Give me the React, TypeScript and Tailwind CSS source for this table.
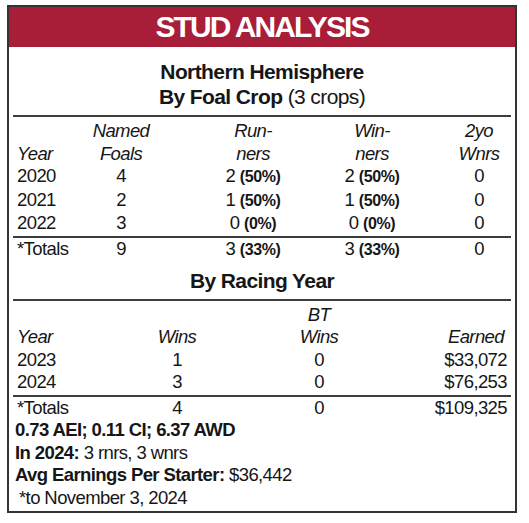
const crop = [
  { year: "2020", foals: "4", rnrs: "2", rp: "(50%)", wnrs: "2", wp: "(50%)", two: "0" },
  { year: "2021", foals: "2", rnrs: "1", rp: "(50%)", wnrs: "1", wp: "(50%)", two: "0" },
  { year: "2022", foals: "3", rnrs: "0", rp: "(0%)", wnrs: "0", wp: "(0%)", two: "0" },
];

const racing = [
  { year: "2023", wins: "1", bt: "0", earned: "$33,072" },
  { year: "2024", wins: "3", bt: "0", earned: "$76,253" },
];

function Pct({ n, p }: { n: string; p: string }) {
  return (
    <span className="whitespace-nowrap">
      {n} <span className="text-[16px] font-bold tracking-[-0.4px]">{p}</span>
    </span>
  );
}

function Rule() {
  return <div className="mx-1 h-[2px] bg-[#3d3d3d]" />;
}

export default function App() {
  return (
    <div className="min-h-[523px] bg-white pl-[7px] pt-[5px] font-['Liberation_Sans',Arial,sans-serif] text-[#161616]">
      <div className="w-[510px] border-2 border-[#333]">
        <div className="flex h-10 items-center justify-center bg-[#a81d37]">
          <h1 className="text-[30px] font-bold leading-none tracking-[-1.9px] text-white">STUD ANALYSIS</h1>
        </div>

        <div className="pt-[12px] text-center text-[21px] font-bold leading-[25px] tracking-[-0.6px]">
          <div>Northern Hemisphere</div>
          <div>
            By Foal Crop <span className="font-normal">(3 crops)</span>
          </div>
        </div>
        <div className="h-[6px]" />
        <Rule />

        <div className="grid grid-cols-[60px_88px_176px_62px_1fr] px-2 pt-[3px] text-[18.5px] leading-[22.5px] tracking-[-0.6px]">
          <div />
          <div className="text-center italic">Named</div>
          <div className="text-center italic">Run-</div>
          <div className="text-center italic">Win-</div>
          <div className="w-14 justify-self-end text-center italic">2yo</div>
          <div className="italic">Year</div>
          <div className="text-center italic">Foals</div>
          <div className="text-center italic">ners</div>
          <div className="text-center italic">ners</div>
          <div className="w-14 justify-self-end text-center italic">Wnrs</div>
          {crop.map((r) => (
            <div key={r.year} className="contents">
              <div>{r.year}</div>
              <div className="text-center">{r.foals}</div>
              <div className="text-center">
                <Pct n={r.rnrs} p={r.rp} />
              </div>
              <div className="text-center">
                <Pct n={r.wnrs} p={r.wp} />
              </div>
              <div className="w-14 justify-self-end text-center">{r.two}</div>
            </div>
          ))}
        </div>
        <Rule />
        <div className="grid grid-cols-[60px_88px_176px_62px_1fr] px-2 text-[18.5px] leading-[22.5px] tracking-[-0.6px]">
          <div>*Totals</div>
          <div className="text-center">9</div>
          <div className="text-center">
            <Pct n="3" p="(33%)" />
          </div>
          <div className="text-center">
            <Pct n="3" p="(33%)" />
          </div>
          <div className="w-14 justify-self-end text-center">0</div>
        </div>

        <div className="pt-[7px] text-center text-[21px] font-bold leading-[25px] tracking-[-0.6px]">By Racing Year</div>
        <div className="h-[5.5px]" />
        <Rule />

        <div className="grid grid-cols-[60px_200px_84px_1fr] px-2 pt-[3px] text-[18.5px] leading-[22.5px] tracking-[-0.6px]">
          <div />
          <div />
          <div className="text-center italic">BT</div>
          <div />
          <div className="italic">Year</div>
          <div className="text-center italic">Wins</div>
          <div className="text-center italic">Wins</div>
          <div className="pr-[3px] text-right italic">Earned</div>
          {racing.map((r) => (
            <div key={r.year} className="contents">
              <div>{r.year}</div>
              <div className="text-center">{r.wins}</div>
              <div className="text-center">{r.bt}</div>
              <div className="text-right">{r.earned}</div>
            </div>
          ))}
        </div>
        <div className="h-[1px]" />
        <Rule />
        <div className="px-2 pb-[2px] text-[18.5px] leading-[22.5px] tracking-[-0.6px]">
          <div className="grid grid-cols-[60px_200px_84px_1fr]">
            <div>*Totals</div>
            <div className="text-center">4</div>
            <div className="text-center">0</div>
            <div className="text-right">$109,325</div>
          </div>
          <div className="-ml-[2px] font-bold">0.73 AEI; 0.11 CI; 6.37 AWD</div>
          <div className="-ml-[2px]">
            <span className="font-bold">In 2024:</span> 3 rnrs, 3 wnrs
          </div>
          <div className="-ml-[2px]">
            <span className="font-bold">Avg Earnings Per Starter:</span> $36,442
          </div>
          <div className="pl-[2px]">*to November 3, 2024</div>
        </div>
      </div>
    </div>
  );
}
